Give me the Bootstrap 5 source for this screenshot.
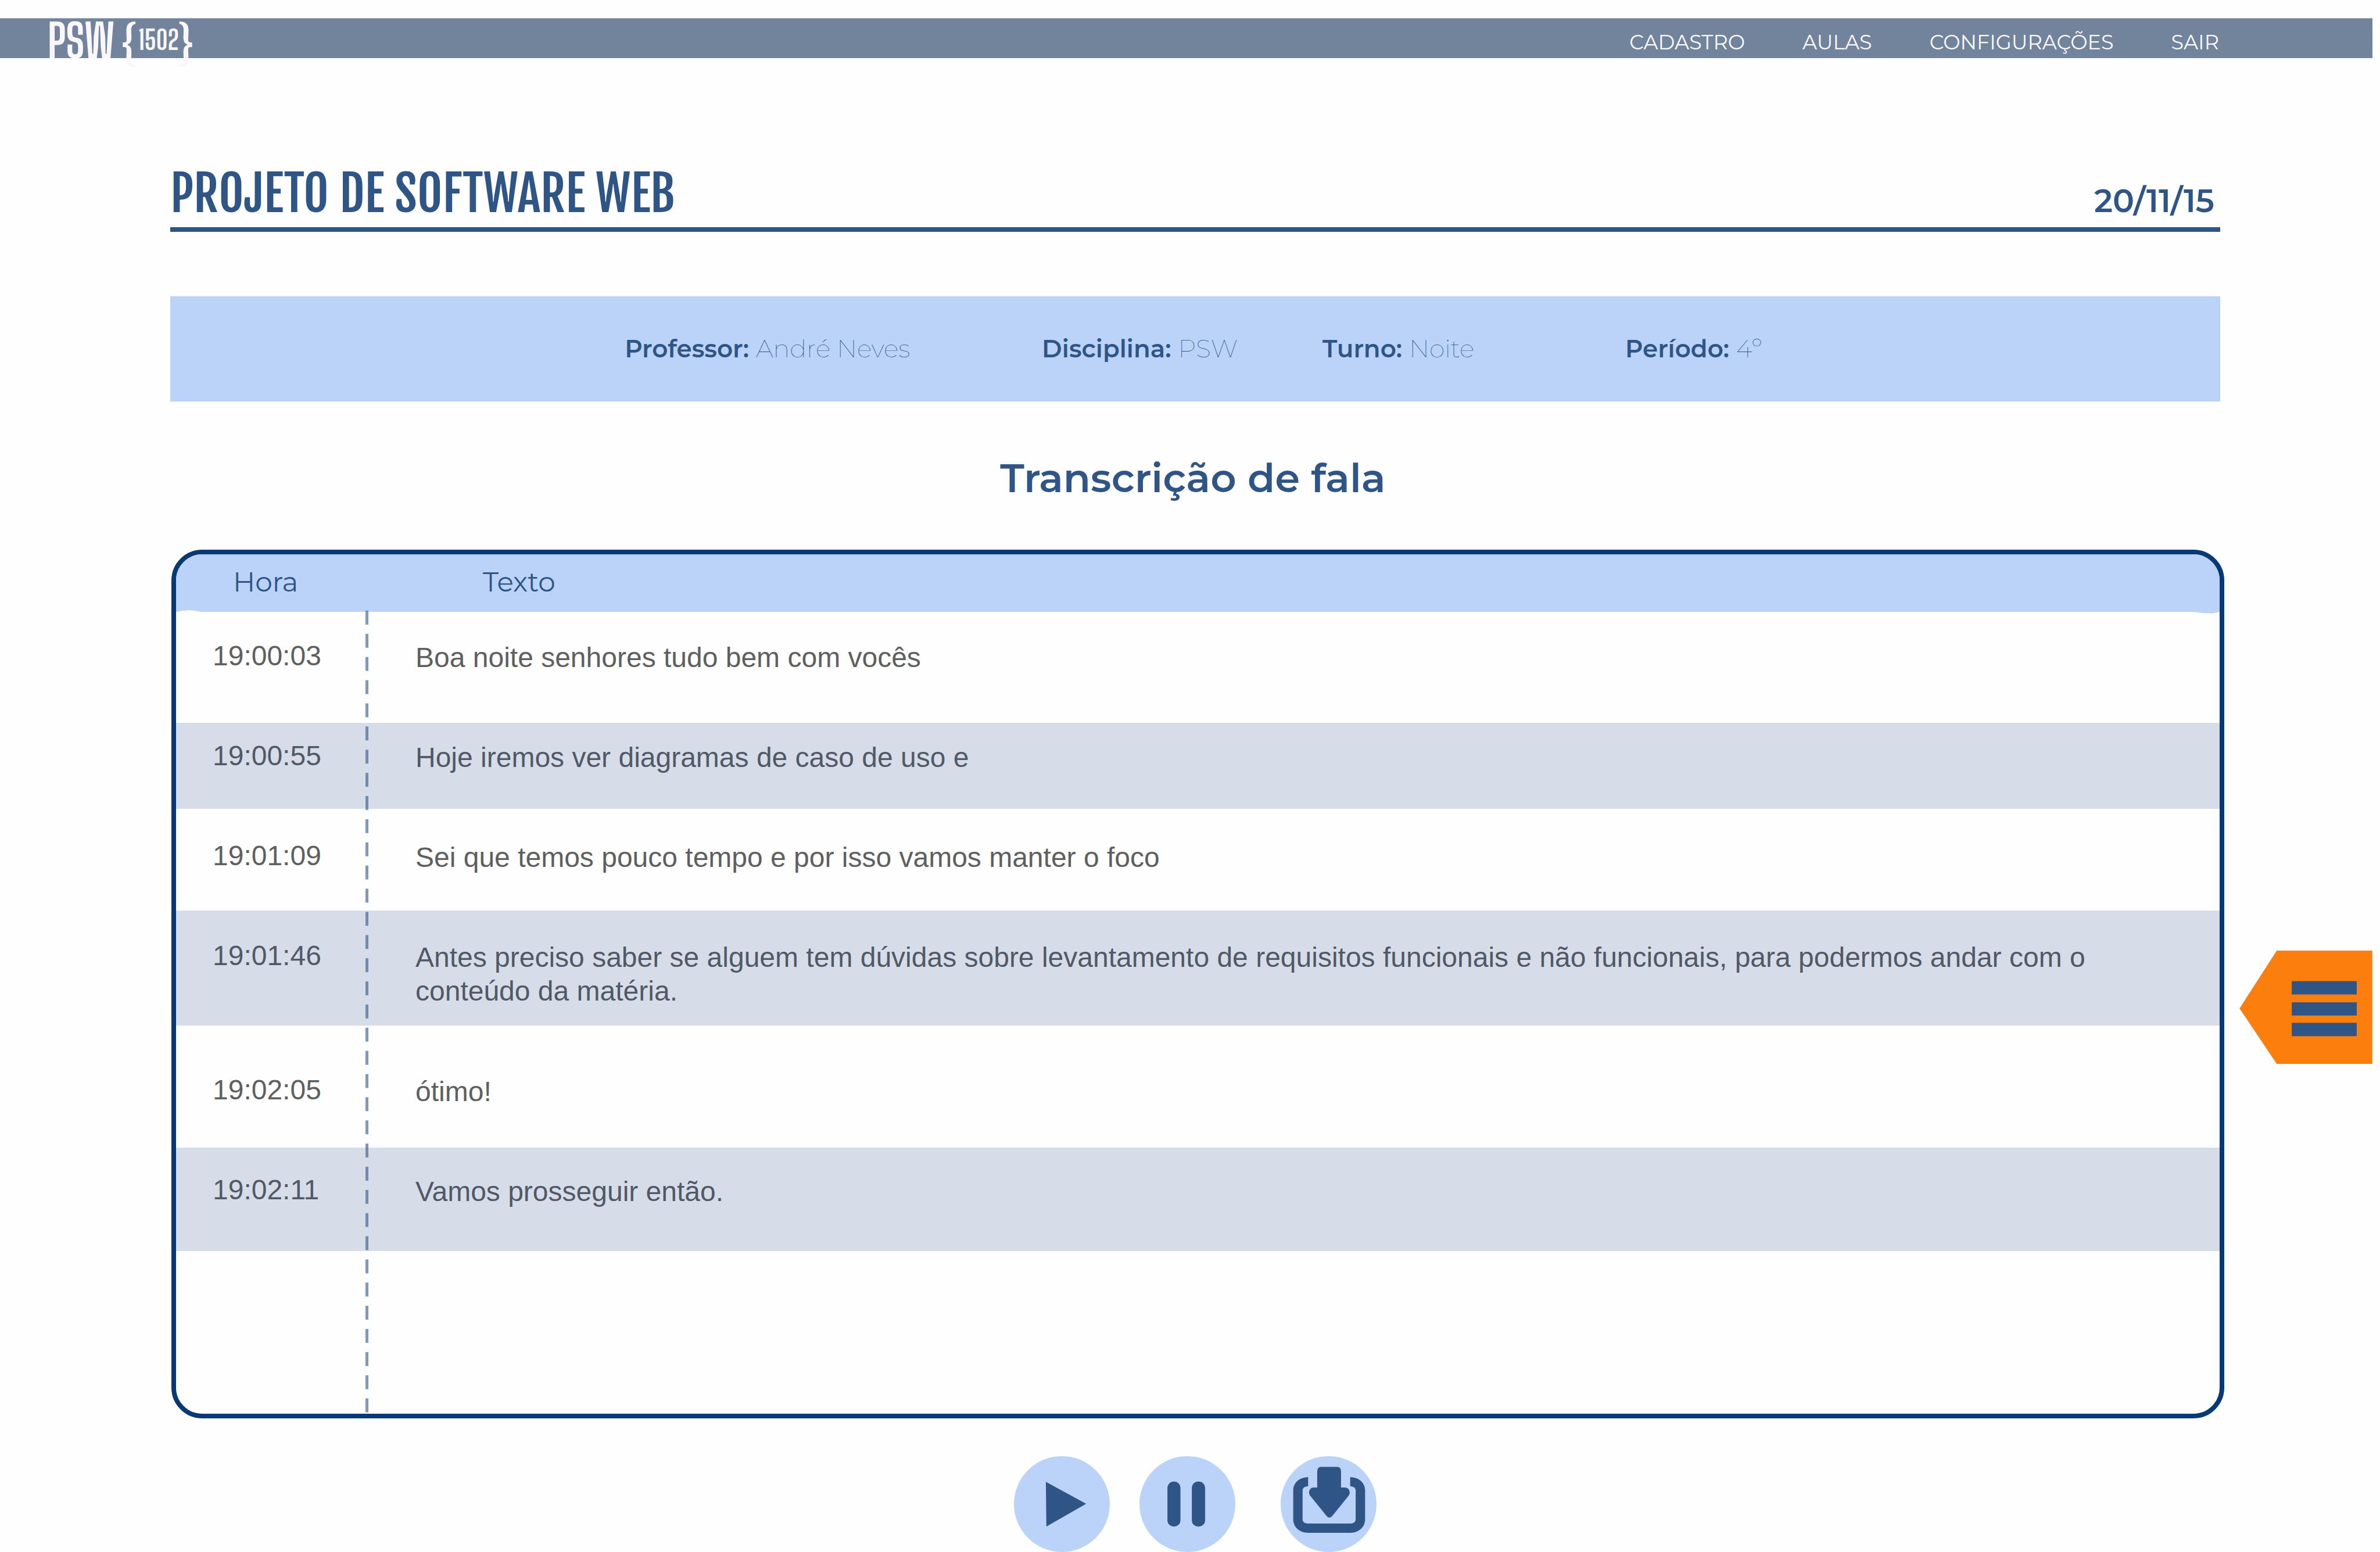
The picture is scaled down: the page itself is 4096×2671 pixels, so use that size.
<!DOCTYPE html>
<html lang="pt-BR">
<head>
<meta charset="utf-8">
<meta name="viewport" content="width=device-width, initial-scale=1">
<title>PSW {1502} - Transcrição de fala</title>
<link href="https://cdn.jsdelivr.net/npm/bootstrap@5.3.0/dist/css/bootstrap.min.css" rel="stylesheet">
<style>
  :root { --azul: #2f5587; --azul-claro: #bbd3f9; --borda: #073975; --faixa: #d6dde9; }
  body { background: #fefefe; color: var(--azul); font-family: Montserrat, Inter, sans-serif; }
  .topo { margin: 31px 13px 0 0; padding: 19px 264px 0 82px; height: 69px; background: #72839c; border-top: 1px solid #a9b6c7; }
  .logo svg { display: block; width: 256px; height: 90px; margin-top: -18px; overflow: visible; }
  .logo text { font-family: "Big Shoulders Display", "Roboto Condensed", sans-serif; font-weight: 700; fill: #f9f7fa; }
  .menu { gap: 99px; }
  .menu a { color: #fafafc; font-size: 35px; line-height: 44px; text-decoration: none; }
  .conteudo { padding: 0 275px 0 293px; }
  .titulo { padding-top: 183px; height: 299px; border-bottom: 8px solid var(--azul); }
  .titulo h1 { font: 400 84px/100px "Fjalla One", "Roboto Condensed", sans-serif; }
  .titulo time { font-size: 55px; font-weight: 600; margin-right: 10px; }
  .dados { display: grid; grid-template-columns: 718fr 483fr 521fr 1024fr; margin-top: 111px; padding: 60px 0 61px 22.17%; background: var(--azul-claro); font-size: 43px; line-height: 60px; }
  .dados > div { gap: 12px; }
  .dados dt { font-size: 42px; font-weight: 600; }
  .dados dd { font-weight: 100; }
  .secao { margin: 89px 8px 0 0; font-size: 69px; line-height: 84px; font-weight: 600; }
  .quadro { margin: 82px -7px 0 2px; border: 8px solid var(--borda); border-radius: 53px; }
  .falas { table-layout: fixed; }
  .falas th, .falas td { padding: 0; box-shadow: none; background: transparent; vertical-align: top; }
  .falas .col-hora { width: 329px; }
  .falas thead th { padding-top: 20px; background: var(--azul-claro); color: var(--azul); font-size: 47px; line-height: 56px; font-weight: 400; }
  .falas thead th:first-child { padding-left: 98px; }
  .falas thead th:last-child { padding-left: 199px; }
  .falas td { padding-top: var(--recuo); color: #5f5f5f; font: 48px/58px "Liberation Sans", Arial, sans-serif; }
  .falas td:first-child { padding-left: 63px; }
  .falas td:last-child { padding: calc(var(--recuo) + 3px) 120px 0 83px; }
  .falas tbody tr:nth-child(even) td { background: var(--faixa); color: #525966; }
  .falas tr:nth-child(1) { height: 191px; --recuo: 47px; }
  .falas tr:nth-child(2) { height: 148px; --recuo: 28px; }
  .falas tr:nth-child(3) { height: 175px; --recuo: 52px; }
  .falas tr:nth-child(4) { height: 198px; --recuo: 49px; }
  .falas tr:nth-child(5) { height: 210px; --recuo: 82px; }
  .falas tr:nth-child(6) { height: 178px; --recuo: 44px; }
  .falas tr:nth-child(7) { height: 280px; }
  .falas thead tr:nth-child(1) { height: 99px; }
  .divisor { left: 326px; top: 97px; bottom: -14px; width: 5px; background: linear-gradient(rgba(47,84,135,.6) 24px, transparent 24px) 0 0 / 5px 40px round; }
  .onda-e { left: 0; top: 96px; width: 45px; height: 4px; }
  .onda-d { right: 0; top: 99px; width: 45px; height: 3px; }
  .controles { margin-top: 65px; }
  .controles button { width: 165px; height: 165px; border-radius: 50%; background: var(--azul-claro); }
  .controles .pausar { margin: 0 78px 0 51px; }
  .controles svg, .aba svg { display: block; width: 100%; height: 100%; }
  .aba { right: 13px; top: 1636px; width: 229px; height: 195px; }
</style>
</head>
<body class="position-relative overflow-x-hidden">
<header class="topo d-flex justify-content-between align-items-start">
  <a class="logo" href="#" aria-label="PSW {1502}">
    <svg viewBox="0 0 256 90">
      <text x="0" y="67" font-size="78">PSW</text>
      <text x="127" y="67" font-size="78">{</text>
      <text x="156" y="53" font-size="45">1502</text>
      <text x="225" y="67" font-size="78">}</text>
    </svg>
  </a>
  <nav class="menu d-flex">
    <a href="#">CADASTRO</a><a href="#">AULAS</a><a href="#">CONFIGURAÇÕES</a><a href="#">SAIR</a>
  </nav>
</header>

<main class="conteudo">
  <div class="titulo d-flex justify-content-between align-items-baseline">
    <h1 class="m-0">PROJETO DE SOFTWARE WEB</h1>
    <time datetime="2015-11-20">20/11/15</time>
  </div>

  <dl class="dados mb-0">
    <div class="d-flex align-items-baseline"><dt>Professor:</dt><dd class="m-0">André Neves</dd></div>
    <div class="d-flex align-items-baseline"><dt>Disciplina:</dt><dd class="m-0">PSW</dd></div>
    <div class="d-flex align-items-baseline"><dt>Turno:</dt><dd class="m-0">Noite</dd></div>
    <div class="d-flex align-items-baseline"><dt>Período:</dt><dd class="m-0">4º</dd></div>
  </dl>

  <h2 class="secao text-center mb-0">Transcrição de fala</h2>

  <section class="quadro position-relative overflow-hidden">
    <table class="falas table table-borderless mb-0">
      <thead><tr><th class="col-hora">Hora</th><th>Texto</th></tr></thead>
      <tbody>
        <tr><td>19:00:03</td><td>Boa noite senhores tudo bem com vocês</td></tr>
        <tr><td>19:00:55</td><td>Hoje iremos ver diagramas de caso de uso e</td></tr>
        <tr><td>19:01:09</td><td>Sei que temos pouco tempo e por isso vamos manter o foco</td></tr>
        <tr><td>19:01:46</td><td>Antes preciso saber se alguem tem dúvidas sobre levantamento de requisitos funcionais e não funcionais, para podermos andar com o conteúdo da matéria.</td></tr>
        <tr><td>19:02:05</td><td>ótimo!</td></tr>
        <tr><td>19:02:11</td><td>Vamos prosseguir então.</td></tr>
        <tr><td></td><td></td></tr>
      </tbody>
    </table>
    <svg class="onda-e position-absolute" viewBox="0 0 45 4" aria-hidden="true"><path d="M0 4V3Q24-3 45 4z" fill="#fefefe"/></svg>
    <svg class="onda-d position-absolute" viewBox="0 0 45 3" aria-hidden="true"><path d="M0 0Q32 5 45 0z" fill="#bbd3f9"/></svg>
    <div class="divisor position-absolute"></div>
  </section>

  <div class="controles d-flex justify-content-center">
    <button type="button" class="border-0 p-0" aria-label="Reproduzir"><svg viewBox="0 0 173 173" fill="#2f5587"><path d="M57.600 46.500L130.300 86L58.500 127z"/></svg></button>
    <button type="button" class="pausar border-0 p-0" aria-label="Pausar"><svg viewBox="0 0 173 173" fill="#2f5587"><rect x="50.500" y="46" width="23.500" height="81" rx="11"/><rect x="94.500" y="46" width="24" height="81" rx="11"/></svg></button>
    <button type="button" class="border-0 p-0" aria-label="Baixar"><svg viewBox="0 0 173 173" fill="#2f5587">
      <path d="M49.600 38C34 38 22.700 48 22.700 62V114C22.700 128 34 138.300 49.600 138.300H126C141 138.300 152.400 128 152.400 114V62C152.400 48 141 38 125.500 38V54.500C131 54.500 135.400 57 135.400 62V114C135.400 119 131 121.700 126 121.700H49.600C44 121.700 39.600 119 39.600 114V62C39.600 57 44 54.500 49.600 54.500z"/>
      <path d="M73 19.300H102Q109 19.300 109 28V56.500H116C123 56.500 127 64 123 71L94 107Q88 115 82 107L53 71C49 64 53 56.500 59 56.500H66V28Q66 19.300 73 19.300z"/></svg></button>
  </div>
</main>

<button type="button" class="aba position-absolute border-0 bg-transparent p-0" aria-label="Abrir menu">
  <svg viewBox="0 0 239 204"><path d="M0 104L67 0H239V204H67z" fill="#fc7e0c"/><path d="M94 55H211V79H94zM94 93H211V117H94zM94 130H211V154H94z" fill="#2f5587"/></svg>
</button>
<script src="https://cdn.jsdelivr.net/npm/bootstrap@5.3.0/dist/js/bootstrap.bundle.min.js"></script>
</body>
</html>
